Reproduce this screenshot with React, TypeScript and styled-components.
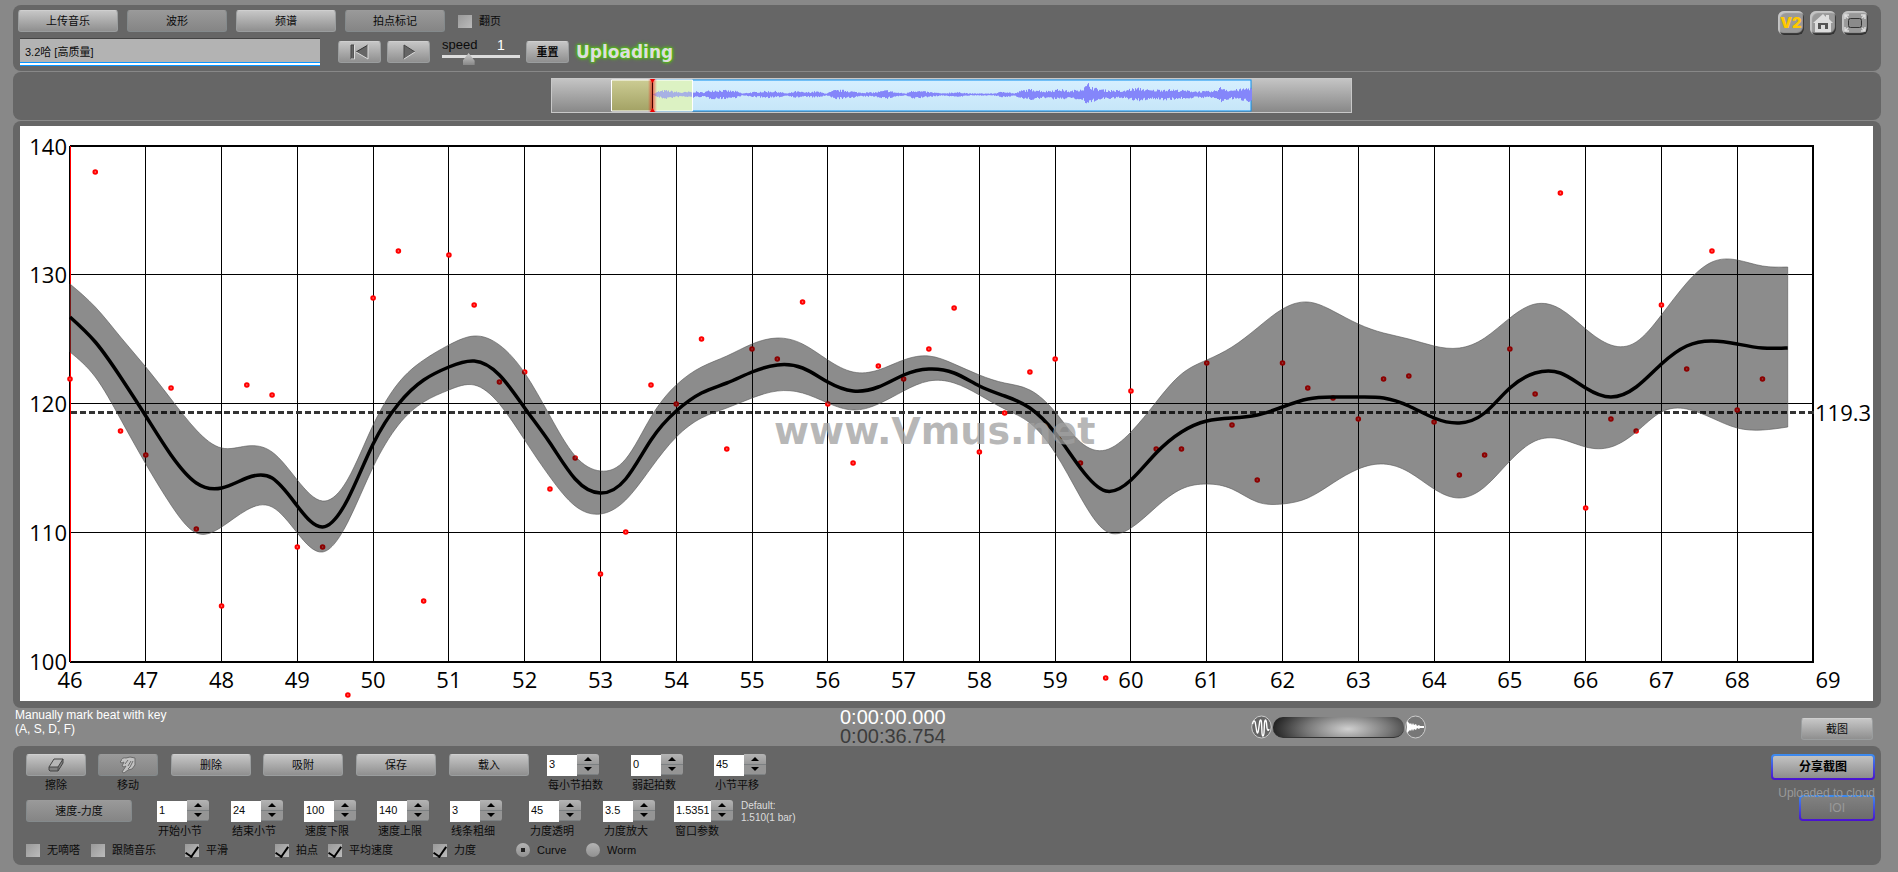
import React, { useId, useState } from "react";
import styled, { createGlobalStyle } from "styled-components";

const GlobalStyle = createGlobalStyle`
  * { box-sizing: border-box; }
  html { background: #888; }
  body {
    margin: 0;
    background: #888;
    color: #0b0b0b;
    font: 11px/14px "Liberation Sans", "Noto Sans CJK SC", sans-serif;
  }
  button, input { font: inherit; color: inherit; margin: 0; }
`;

const Page = styled.div`
  display: flex;
  flex-direction: column;
  gap: 1px;
  padding: 5px 17px 7px 13px;
`;

const Panel = styled.section`
  background: #666;
  border-radius: 8px;
`;

const Header = styled(Panel)`
  display: flex;
  justify-content: space-between;
  height: 66px;
  padding: 5px 13px 4px 5px;
`;

const HeaderRows = styled.div`
  display: flex;
  flex-direction: column;
  gap: 6px;
`;

const HeaderRow = styled.div<{ $gap: number }>`
  display: flex;
  align-items: center;
  gap: ${(p) => p.$gap}px;
`;

const Button = styled.button<{ $width?: number; $dim?: boolean; $bold?: boolean }>`
  display: flex;
  align-items: center;
  justify-content: center;
  width: ${(p) => p.$width ?? 80}px;
  height: 22px;
  padding: 0;
  border: 1px solid ${(p) => (p.$dim ? "#848a8c" : "#9a9d9e")};
  border-top-color: ${(p) => (p.$dim ? "#9b9b9b" : "#cfcfcf")};
  border-radius: 3px;
  background: ${(p) =>
    p.$dim ? "linear-gradient(#999, #858585)" : "linear-gradient(#c6c6c6, #8f8f8f)"};
  font-weight: ${(p) => (p.$bold ? 700 : 400)};
`;

const TrackName = styled.input`
  width: 300px;
  height: 28px;
  margin: 0 18px 0 2px;
  padding: 0 5px 3px;
  border: 0;
  border-top: 1px solid #444;
  border-bottom: 1px solid #0a96ff;
  background: linear-gradient(#b3b3b3, #b3b3b3) 0 0 / 100% 23px no-repeat,
    linear-gradient(#0a96ff, #0a96ff) 0 23px / 100% 1px no-repeat, #fff;
`;

const Transport = styled.div`
  display: flex;
  gap: 6px;
`;

const SpeedBox = styled.label`
  display: grid;
  grid-template-columns: 55px 23px;
  width: 78px;
  margin: 0 6px 0 12px;
  font-size: 13px;
  line-height: 14px;
`;

const SpeedValue = styled.output`
  color: #fff;
  font-size: 14px;
`;

const Slider = styled.input`
  grid-column: 1 / -1;
  appearance: none;
  width: 100%;
  height: 14px;
  background: linear-gradient(#ddd, #ddd) 0 3px / 100% 3px no-repeat;
  &::-webkit-slider-thumb {
    appearance: none;
    width: 12px;
    height: 12px;
    background: linear-gradient(#ccc, #888);
    clip-path: polygon(50% 0, 100% 65%, 100% 100%, 0 100%, 0 65%);
  }
`;

const Uploading = styled.strong`
  margin-left: 7px;
  color: #ddd;
  font: 700 17px/22px "DejaVu Sans", sans-serif;
  text-shadow: 0 0 2px #4fd000, 0 0 3px #4fd000, 0 0 4px #4fd000;
`;

const IconLinks = styled.nav`
  display: flex;
  gap: 6px;
  padding-top: 1px;
`;

const IconLink = styled.a`
  display: flex;
  align-items: center;
  justify-content: center;
  width: 26px;
  height: 24px;
  border-radius: 6px;
  background: #999;
  box-shadow: inset 2px 2px 1px #c4c4c4, inset -1px -2px 1px #333;
  color: #ffc800;
  font: 900 15px/20px Inter, sans-serif;
  text-decoration: none;
`;

const Overview = styled(Panel)`
  display: flex;
  justify-content: center;
  height: 48px;
  padding: 6px 0 0 9px;
`;

const OverviewTrack = styled.div`
  width: 801px;
  height: 35px;
  border: 1px solid #c8c8c8;
  background: linear-gradient(#c4c4c4, #888);
  svg { display: block; }
`;

const ChartPanel = styled(Panel)`
  padding: 5px 8px 7px 7px;
`;

const Chart = styled.svg`
  display: block;
  width: 100%;
  height: auto;
  background: #fff;
  font: 22px "Open Sans", sans-serif;
`;

const Watermark = styled.text`
  fill: rgba(160, 160, 160, 0.75);
  font: 700 38px "DejaVu Sans", sans-serif;
`;

const Status = styled.div`
  display: grid;
  grid-template-columns: 825fr 411fr 550fr 72px;
  height: 37px;
  margin-top: -1px;
  padding: 0 8px 0 2px;
`;

const Hint = styled.p`
  margin: 0;
  color: #fff;
  font-size: 12px;
  line-height: 14px;
`;

const Times = styled.div`
  font-size: 20px;
  line-height: 19px;
`;

const Time = styled.div<{ $color: string }>`
  color: ${(p) => p.$color};
`;

const Zoom = styled.div`
  display: flex;
  align-items: center;
  gap: 1px;
`;

const Wheel = styled.div`
  width: 131px;
  height: 21px;
  border-radius: 10px;
  border-bottom: 1px solid #333;
  background: radial-gradient(ellipse 76px 28px at 75px 12px, #d0d0d0, #777 55%, #222);
`;

const Capture = styled.div`
  padding-top: 10px;
`;

const Controls = styled(Panel)`
  display: flex;
  justify-content: space-between;
  height: 119px;
  padding: 8px 6px 0 13px;
`;

const Rows = styled.div`
  display: flex;
  flex-direction: column;
`;

const Row = styled.div<{ $columns: string; $height: number }>`
  display: grid;
  grid-template-columns: ${(p) => p.$columns};
  align-items: start;
  height: ${(p) => p.$height}px;
`;

const Tool = styled.label`
  display: flex;
  flex-direction: column;
  align-items: center;
  gap: 2px;
  width: 60px;
`;

const Field = styled.div`
  display: flex;
  flex-direction: column;
  gap: 2px;
  white-space: nowrap;
  label { padding-left: 1px; }
`;

const SpinBox = styled.div`
  display: flex;
  height: 22px;
`;

const SpinInput = styled.input<{ $width: number }>`
  width: ${(p) => p.$width}px;
  height: 21px;
  padding: 0 2px 4px;
  border: 0;
  align-self: flex-end;
  background: #fff;
`;

const SpinButtons = styled.div`
  display: grid;
  width: 22px;
  height: 21px;
  border-radius: 0 3px 3px 0;
  overflow: hidden;
`;

const SpinButton = styled.button<{ $down?: boolean }>`
  display: flex;
  align-items: center;
  justify-content: center;
  padding: 0;
  border: 0;
  border-bottom: 1px solid #7c8082;
  background: ${(p) => (p.$down ? "#959595" : "linear-gradient(#b4b4b4, #9a9a9a)")};
  &::before {
    content: "";
    border: 4px solid transparent;
    border-width: ${(p) => (p.$down ? "4px 4px 0" : "0 4px 4px")};
    border-top-color: ${(p) => (p.$down ? "#000" : "transparent")};
    border-bottom-color: ${(p) => (p.$down ? "transparent" : "#000")};
  }
`;

const DefaultNote = styled.p`
  margin: 0;
  color: #ddd;
  font-size: 10px;
  line-height: 12px;
  white-space: nowrap;
`;

const Choice = styled.label`
  display: flex;
  align-items: center;
  gap: 7px;
  white-space: nowrap;
`;

const PageTurn = styled(Choice)`
  margin-left: 4px;
`;

const Check = styled.input`
  appearance: none;
  display: grid;
  place-items: center;
  flex: none;
  width: 14px;
  height: 13px;
  background: linear-gradient(135deg, #999, #bbb);
  &[type="radio"] {
    height: 14px;
    border-radius: 50%;
    background: linear-gradient(#b4b4b4, #909090);
  }
  &[type="checkbox"]:checked::before {
    content: "";
    width: 6px;
    height: 11px;
    border: solid #000;
    border-width: 0 2px 2px 0;
    rotate: 35deg;
  }
  &[type="radio"]:checked::before {
    content: "";
    width: 4px;
    height: 4px;
    background: #222;
  }
`;

const Share = styled.div`
  display: flex;
  flex-direction: column;
  align-items: flex-end;
`;

const CloudButton = styled.button<{ $width: number; $faded?: boolean }>`
  width: ${(p) => p.$width}px;
  height: 26px;
  padding: 0;
  border: 2px solid transparent;
  border-radius: 4px;
  background: ${(p) => (p.$faded ? "linear-gradient(#808080, #6c6c6c)" : "linear-gradient(#c2c2c2, #8d8d8d)")}
      padding-box,
    linear-gradient(#3c8ef0, #4a10d0) border-box;
  color: ${(p) => (p.$faded ? "#999" : "#000")};
  font-size: 12px;
  font-weight: ${(p) => (p.$faded ? 400 : 700)};
`;

const CloudNote = styled.p`
  margin: 6px 0 -5px;
  color: #999;
  font-size: 12px;
  line-height: 14px;
  z-index: 1;
`;

/* Overview waveform: [x, half height] pairs inside the selected range. */
const ENVELOPE: [number, number][] = [
  [100, 0], [106, 3], [113, 4], [121, 3], [129, 2], [142, 3], [150, 2], [158, 4], [171, 4], [184, 3],
  [190, 1], [198, 2], [211, 3], [224, 3], [235, 1], [243, 3], [253, 2], [264, 3], [274, 1], [282, 4],
  [293, 4], [306, 2], [322, 2], [335, 4], [343, 2], [354, 1], [359, 4], [370, 3], [380, 2], [391, 1],
  [399, 2], [409, 2], [417, 1], [428, 1], [441, 1], [452, 3], [462, 1], [470, 4], [481, 5], [492, 3],
  [507, 5], [518, 3], [526, 5], [531, 6], [536, 10], [542, 6], [555, 4], [563, 4], [571, 3], [576, 5],
  [587, 6], [598, 4], [613, 5], [629, 4], [645, 3], [661, 3], [669, 7], [677, 4], [688, 5], [700, 7],
];

const wavePath = (() => {
  let d = "";
  let seed = 7;
  const random = () => {
    seed = (seed * 16807) % 2147483647;
    return seed / 2147483647;
  };
  for (let i = 0; i < ENVELOPE.length - 1; i++) {
    const [x0, a0] = ENVELOPE[i];
    const [x1, a1] = ENVELOPE[i + 1];
    for (let x = x0; x < x1; x++) {
      const base = a0 + ((a1 - a0) * (x - x0)) / (x1 - x0);
      const up = Math.max(0.5, base * (0.6 + 0.6 * random()));
      const down = Math.max(0.5, base * (0.6 + 0.6 * random()));
      d += `M${x}.5 ${(15.5 - up).toFixed(1)}V${(15.5 + down).toFixed(1)}`;
    }
  }
  return d;
})();

/* Tempo chart. One sample per beat, three beats to a bar, as heights on the canvas. */
const LEFT = 70;
const RIGHT = 1813;
const TOP = 146;
const BOTTOM = 662;
const FIRST_BAR = 46;
const BAR = (RIGHT - LEFT) / 23;
const beatX = (i: number) => LEFT + (i * BAR) / 3;

const BEATS = [
  379, 172, 431, 455, 388, 529, 606, 385, 395, 547, 547, 695, 298, 251, 601, 255, 305, 382, 372, 489, 458,
  574, 532, 385, 404, 339, 449, 349, 359, 302, 404, 463, 366, 379, 349, 308, 452, 413, 372, 359, 463, 678,
  391, 449, 449, 363, 425, 480, 363, 388, 398, 419, 379, 376, 422, 475, 455, 349, 394, 193, 508, 419, 431,
  305, 369, 251, 410, 379,
];
const MEAN = [
  317, 342, 377, 416, 455, 483, 488, 478, 478, 506, 527, 499, 444, 404, 380, 367, 361, 375, 408, 443, 479,
  493, 479, 440, 411, 393, 383, 372, 365, 368, 382, 391, 387, 375, 369, 373, 386, 396, 408, 433, 468, 491,
  480, 453, 432, 421, 418, 415, 407, 399, 397, 397, 398, 406, 418, 423, 413, 388, 373, 373, 388, 397, 387,
  364, 346, 341, 344, 348, 348,
];
const UPPER = [
  284, 307, 337, 367, 399, 430, 448, 446, 452, 480, 501, 479, 425, 383, 360, 345, 336, 345, 373, 416, 456,
  471, 459, 417, 385, 367, 356, 344, 338, 344, 360, 372, 370, 360, 356, 364, 375, 383, 390, 412, 442, 450,
  432, 402, 374, 360, 347, 328, 309, 302, 311, 324, 333, 339, 346, 348, 338, 318, 304, 309, 329, 345, 342,
  315, 283, 262, 260, 266, 267,
];
const LOWER = [
  352, 377, 419, 464, 505, 533, 527, 510, 507, 533, 552, 522, 467, 425, 402, 390, 385, 404, 440, 477, 506,
  514, 500, 468, 437, 418, 408, 398, 391, 393, 403, 410, 404, 391, 381, 383, 395, 409, 423, 453, 497, 531,
  528, 507, 489, 484, 489, 502, 504, 498, 483, 469, 464, 472, 489, 498, 487, 461, 441, 439, 447, 447, 432,
  412, 409, 418, 428, 430, 427,
];

type Point = [number, number];

/* Natural cubic spline through evenly spaced points, as Bezier segments. */
function smooth(points: Point[]): string {
  const n = points.length;
  const y = points.map((p) => p[1]);
  const c: number[] = [0.5];
  const r: number[] = [(3 * (y[1] - y[0])) / 2];
  for (let i = 1; i < n; i++) {
    const last = i === n - 1;
    const rhs = last ? 3 * (y[i] - y[i - 1]) : 3 * (y[i + 1] - y[i - 1]);
    const m = (last ? 2 : 4) - c[i - 1];
    c[i] = 1 / m;
    r[i] = (rhs - r[i - 1]) / m;
  }
  const slope = [...r];
  for (let i = n - 2; i >= 0; i--) slope[i] = r[i] - c[i] * slope[i + 1];
  let d = "";
  for (let i = 0; i < n - 1; i++) {
    const third = (points[i + 1][0] - points[i][0]) / 3;
    d +=
      "C" +
      [
        points[i][0] + third, y[i] + slope[i] / 3,
        points[i + 1][0] - third, y[i + 1] - slope[i + 1] / 3,
        points[i + 1][0], y[i + 1],
      ]
        .map((v) => v.toFixed(1))
        .join(" ");
  }
  return d;
}

const toPoints = (ys: number[]): Point[] => ys.map((y, i) => [beatX(i), y]);
const upper = toPoints(UPPER);
const lower = toPoints(LOWER).reverse();
const mean = toPoints(MEAN);
const bandPath = `M${upper[0].join(" ")}${smooth(upper)}L${lower[0].join(" ")}${smooth(lower)}Z`;
const meanPath = `M${mean[0].join(" ")}${smooth(mean)}`;

function TempoChart() {
  const bars = Array.from({ length: 24 }, (_, i) => i);
  return (
    <Chart viewBox="20 126 1853 575" role="img" aria-label="Tempo curve">
      <g stroke="#000" strokeWidth="1" shapeRendering="crispEdges">
        {bars.slice(1, 23).map((i) => (
          <line key={i} x1={LEFT + i * BAR} x2={LEFT + i * BAR} y1={TOP} y2={BOTTOM} />
        ))}
        {[1, 2, 3].map((i) => (
          <line key={i} x1={LEFT} x2={RIGHT} y1={TOP + i * 129 - 1} y2={TOP + i * 129 - 1} />
        ))}
      </g>
      <path d={`M${LEFT} ${TOP}H${RIGHT}V${BOTTOM}H${LEFT}`} fill="none" stroke="#000" strokeWidth="2" />
      <path d={`M69.500 ${TOP}V${BOTTOM}`} stroke="#000" />
      <path d={`M70.500 ${TOP}V${BOTTOM}`} stroke="#f00" />
      <line x1={LEFT + 1} x2={RIGHT + 4} y1="412.5" y2="412.5" stroke="#333" strokeWidth="3" strokeDasharray="6 3" />
      <g fill="#f88" stroke="#f00" strokeWidth="2">
        {BEATS.map((y, i) => (
          <circle key={i} cx={beatX(i)} cy={y} r="1.8" />
        ))}
      </g>
      <path d={bandPath} fill="#000" fillOpacity="0.45" stroke="#555" strokeOpacity="0.6" />
      <path d={meanPath} fill="none" stroke="#000" strokeWidth="3.500" />
      {[140, 130, 120, 110, 100].map((v, i) => (
        <text key={v} x="67" y={155 + Math.floor(i * 128.9)} textAnchor="end">{v}</text>
      ))}
      {bars.map((i) => (
        <text key={i} x={i === 23 ? 1828 : LEFT + i * BAR} y="688" textAnchor="middle">{FIRST_BAR + i}</text>
      ))}
      <text x="1815" y="421">119.3</text>
      <Watermark x="774" y="444">www.Vmus.net</Watermark>
    </Chart>
  );
}

function OverviewStrip() {
  return (
    <OverviewTrack>
      <svg width="799" height="33" viewBox="0 0 799 33" role="img" aria-label="Waveform overview">
        <defs>
          <linearGradient id="olive" x2="0" y2="1">
            <stop stopColor="#cccc93" />
            <stop offset="1" stopColor="#a3a265" />
          </linearGradient>
          <linearGradient id="sky" x2="0" y2="1">
            <stop stopColor="#d6efff" />
            <stop offset="1" stopColor="#c6e6f8" />
          </linearGradient>
          <linearGradient id="glow">
            <stop stopColor="#f00" stopOpacity="0" />
            <stop offset=".5" stopColor="#e00" stopOpacity=".6" />
            <stop offset="1" stopColor="#f00" stopOpacity="0" />
          </linearGradient>
        </defs>
        <rect x="100" y="1" width="599" height="31" fill="url(#sky)" stroke="#0a90f0" />
        <rect x="100" y="1" width="40" height="31" fill="#dcf2c4" />
        <path d={wavePath} stroke="#8486fa" />
        <rect x="100" y="2" width="40" height="29" fill="#dcf2c4" fillOpacity=".4" />
        <rect x="60" y="1" width="40" height="31" fill="url(#olive)" />
        <path d="M140.500 1H59.500V32H140.500V1" fill="none" stroke="#fff" />
        <rect x="96" y="0" width="9" height="33" fill="url(#glow)" />
        <path d="M100.500 1V32" stroke="#400" />
        <path d="M98 0h5l-2.500 4zM98 33h5l-2.500-4z" fill="#e00" />
      </svg>
    </OverviewTrack>
  );
}

const SkipBackIcon = () => (
  <svg width="24" height="18" viewBox="0 0 24 18" aria-hidden="true">
    <path d="M3 2h3v14H3z" fill="#666" stroke="#444" />
    <path d="M20 2v14L8 9z" fill="#666" />
    <path d="M20 2 8 9" stroke="#333" />
    <path d="M8 9l12 7V2M6.500 2v14H3" fill="none" stroke="#ddd" />
  </svg>
);

const PlayIcon = () => (
  <svg width="20" height="18" viewBox="0 0 20 18" aria-hidden="true">
    <path d="M5 2v14l11-7z" fill="#666" />
    <path d="M5 16V2l11 7" fill="none" stroke="#444" />
    <path d="M5 16l11-7" stroke="#ddd" />
  </svg>
);

const HomeIcon = () => (
  <svg width="22" height="20" viewBox="0 0 22 20" aria-hidden="true">
    <path d="M11 1 1 10h2v9h16v-9h2l-4-4V2h-3v2z" fill="#ddd" />
    <path d="M6 16v-6h10v6h-3v-4H9v4z" fill="#555" />
  </svg>
);

const FullscreenIcon = () => (
  <svg width="24" height="20" viewBox="0 0 24 20" aria-hidden="true">
    <rect x="5.500" y="5.500" width="13" height="9" rx="2" fill="#8a8a8a" stroke="#333" />
    <path d="M2 6V2h4M2 2l3 3M22 6V2h-4m4 0-3 3M2 14v4h4m-4 0 3-3M22 14v4h-4m4 0-3-3" fill="none" stroke="#ddd" strokeWidth="1.500" />
  </svg>
);

const EraserIcon = () => (
  <svg width="18" height="16" viewBox="0 0 18 16" aria-hidden="true">
    <path d="M7 2h9l-5 8H2z" fill="#b5b5b5" />
    <path d="M2 10h8l1 3-1 1H3l-1-1zM16 2v4l-5 8v-4z" fill="#808080" />
    <path d="M7 2h9v4l-5 8H3l-1-1v-3zM2 10h9l5-8M11 10v4" fill="none" stroke="#444" strokeLinejoin="round" />
  </svg>
);

const FingerIcon = () => (
  <svg width="18" height="18" viewBox="0 0 18 18" aria-hidden="true">
    <path d="M2 5Q3 1 7 2l4-1 5 1v7l-3 4-4 1-4 3-2-1 4-6-2 1-2-1 2-4-2 1-2-1z" fill="#c2c2c2" stroke="#6b6b6b" />
    <path d="M9 4 6 8m6-3-3 5m5-5-3 6-2 2" fill="none" stroke="#6b6b6b" />
  </svg>
);

const SineIcon = () => (
  <svg width="21" height="24" viewBox="0 0 21 24" aria-hidden="true">
    <ellipse cx="10.500" cy="12" rx="9.800" ry="11" fill="#666" stroke="#ccc" />
    <path d="M1.500 9c1-4 2.500-4 3 0l1 6c.5 4 1.500 4 2 0l1-7c.5-4 1.800-4 2 0l.5 10c.3 4 1.500 4 2 0l.5-10c.5-4 1.500-4 2 0l.5 5c.5 3 1.500 3 2 1" fill="none" stroke="#fff" strokeWidth="1.400" />
  </svg>
);

const PulseIcon = () => (
  <svg width="21" height="24" viewBox="0 0 21 24" aria-hidden="true">
    <ellipse cx="10.500" cy="12" rx="9.800" ry="11" fill="#777" stroke="#ccc" />
    <path d="M2 6l2 2 1 1 1-1 1 2 1-2 1 2 2-1 1 2 2-1 1 1 4 0v2l-4 0-1 1-2-1-1 2-2-1-1 2-1-2-1 2-1-1-1 1-2 2z" fill="#fff" />
  </svg>
);

function Spinner({ label, value, width = 30 }: { label: string; value: string; width?: number }) {
  const id = useId();
  const [text, setText] = useState(value);
  const step = (by: number) => setText(String(Number(text) + by));
  return (
    <Field>
      <SpinBox>
        <SpinInput id={id} $width={width} value={text} onChange={(e) => setText(e.target.value)} />
        <SpinButtons>
          <SpinButton type="button" aria-label={`${label} +`} onClick={() => step(1)} />
          <SpinButton type="button" $down aria-label={`${label} -`} onClick={() => step(-1)} />
        </SpinButtons>
      </SpinBox>
      <label htmlFor={id}>{label}</label>
    </Field>
  );
}

function Tick({ label, on }: { label: string; on?: boolean }) {
  return (
    <Choice>
      <Check type="checkbox" defaultChecked={on} />
      {label}
    </Choice>
  );
}

export default function App() {
  const [speed, setSpeed] = useState(1);
  return (
    <>
      <GlobalStyle />
      <Page>
        <Header as="header">
          <HeaderRows>
            <HeaderRow $gap={9}>
              <Button $width={100}>上传音乐</Button>
              <Button $width={100} $dim>波形</Button>
              <Button $width={100}>频谱</Button>
              <Button $width={100} $dim>拍点标记</Button>
              <PageTurn>
                <Check type="checkbox" />
                翻页
              </PageTurn>
            </HeaderRow>
            <HeaderRow $gap={0}>
              <TrackName aria-label="Track" defaultValue="3.2哈 [高质量]" />
              <Transport>
                <Button $width={43} aria-label="Back to start"><SkipBackIcon /></Button>
                <Button $width={43} aria-label="Play"><PlayIcon /></Button>
              </Transport>
              <SpeedBox>
                <span>speed</span>
                <SpeedValue>{speed}</SpeedValue>
                <Slider
                  type="range"
                  min="0.5"
                  max="2.1"
                  step="0.1"
                  value={speed}
                  onChange={(e) => setSpeed(Number(e.target.value))}
                />
              </SpeedBox>
              <Button $width={43} $bold>重置</Button>
              <Uploading>Uploading</Uploading>
            </HeaderRow>
          </HeaderRows>
          <IconLinks>
            <IconLink href="#v2">V2</IconLink>
            <IconLink href="#home" aria-label="Home"><HomeIcon /></IconLink>
            <IconLink href="#fullscreen" aria-label="Full screen"><FullscreenIcon /></IconLink>
          </IconLinks>
        </Header>

        <Overview>
          <OverviewStrip />
        </Overview>

        <ChartPanel>
          <TempoChart />
        </ChartPanel>

        <Status>
          <Hint>
            Manually mark beat with key
            <br />
            (A, S, D, F)
          </Hint>
          <Times>
            <Time $color="#fff">0:00:00.000</Time>
            <Time $color="#3c3c3c">0:00:36.754</Time>
          </Times>
          <Zoom>
            <SineIcon />
            <Wheel />
            <PulseIcon />
          </Zoom>
          <Capture>
            <Button $width={72}>截图</Button>
          </Capture>
        </Status>

        <Controls>
          <Rows>
            <Row $columns="72px 73px 92px 93px 93px 98px 84px 83px auto" $height={46}>
              <Tool>
                <Button $width={60}><EraserIcon /></Button>
                擦除
              </Tool>
              <Tool>
                <Button $width={60} $dim><FingerIcon /></Button>
                移动
              </Tool>
              <Button>删除</Button>
              <Button>吸附</Button>
              <Button>保存</Button>
              <Button>载入</Button>
              <Spinner label="每小节拍数" value="3" />
              <Spinner label="弱起拍数" value="0" />
              <Spinner label="小节平移" value="45" />
            </Row>
            <Row $columns="131px 74px 73px 73px 73px 79px 74px 71px 67px auto" $height={43}>
              <Button $width={106} $dim>速度-力度</Button>
              <Spinner label="开始小节" value="1" />
              <Spinner label="结束小节" value="24" />
              <Spinner label="速度下限" value="100" />
              <Spinner label="速度上限" value="140" />
              <Spinner label="线条粗细" value="3" />
              <Spinner label="力度透明" value="45" />
              <Spinner label="力度放大" value="3.5" />
              <Spinner label="窗口参数" value="1.5351" width={37} />
              <DefaultNote>
                Default:
                <br />
                1.510(1 bar)
              </DefaultNote>
            </Row>
            <Row $columns="65px 94px 90px 53px 105px 83px 70px auto" $height={16}>
              <Tick label="无嘀嗒" />
              <Tick label="跟随音乐" />
              <Tick label="平滑" on />
              <Tick label="拍点" on />
              <Tick label="平均速度" on />
              <Tick label="力度" on />
              <Choice>
                <Check type="radio" name="view" defaultChecked />
                Curve
              </Choice>
              <Choice>
                <Check type="radio" name="view" />
                Worm
              </Choice>
            </Row>
          </Rows>
          <Share>
            <CloudButton $width={104}>分享截图</CloudButton>
            <CloudNote>Uploaded to cloud</CloudNote>
            <CloudButton $width={76} $faded>IOI</CloudButton>
          </Share>
        </Controls>
      </Page>
    </>
  );
}
